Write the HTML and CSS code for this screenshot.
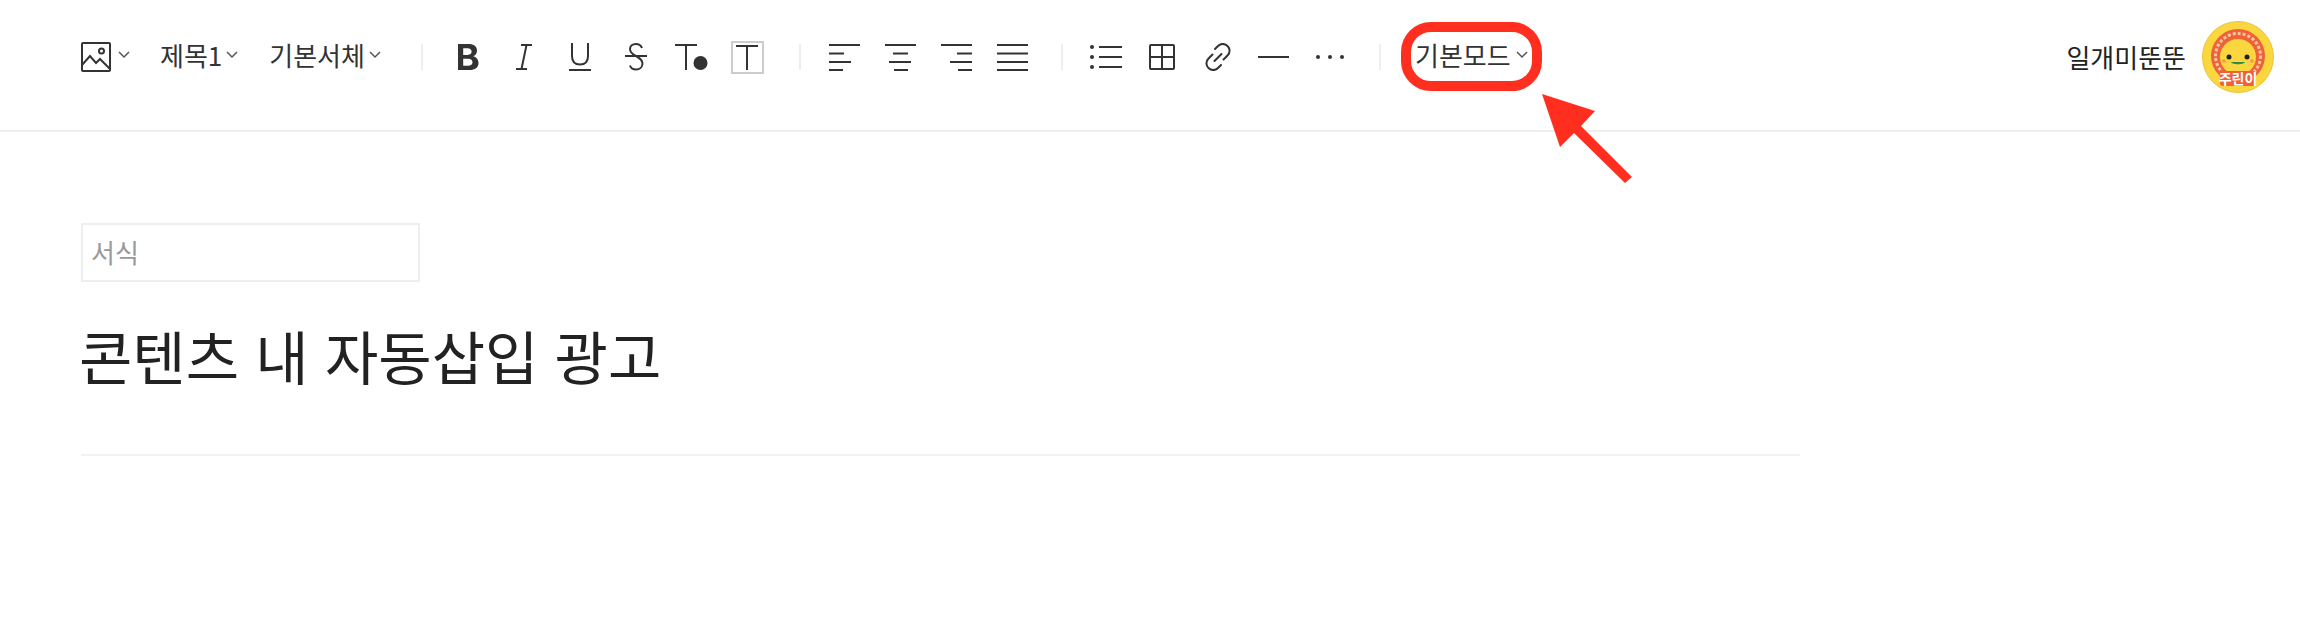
FILE: index.html
```html
<!DOCTYPE html>
<html lang="ko">
<head>
  <meta charset="UTF-8" />
  <title>기본모드</title>
  <link rel="stylesheet" href="styles.css">
</head>
<body>
  <div class="toolbar">
    <div class="tools">
      <button class="tool-pick image-pick">
        <svg width="30" height="30" viewBox="0 0 30 30" fill="none" stroke="#333" stroke-width="2"><rect x="1" y="1" width="28" height="28" rx="1"/><path d="M1 23l8-9 6 7 4-4 10 10"/><circle cx="20.500" cy="9" r="2.500"/></svg>
        <svg class="chev" width="12" height="8" viewBox="0 0 12 8" fill="none" stroke="#555" stroke-width="1.500"><path d="M1 1l5 5 5-5"/></svg>
      </button>
      <button class="tool-pick heading-pick">제목1<svg class="chev" width="12" height="8" viewBox="0 0 12 8" fill="none" stroke="#555" stroke-width="1.500"><path d="M1 1l5 5 5-5"/></svg></button>
      <button class="tool-pick font-pick">기본서체<svg class="chev" width="12" height="8" viewBox="0 0 12 8" fill="none" stroke="#555" stroke-width="1.500"><path d="M1 1l5 5 5-5"/></svg></button>

      <span class="sep"></span>

      <div class="group group-style">
        <button class="icon"><svg width="22" height="26" viewBox="0 0 22 26" fill="#333"><path d="M1 0h10.500c5.500 0 8.500 2.500 8.500 6.500 0 2.800-1.500 5-4 5.800 3.200 .7 5.500 3.200 5.500 6.700 0 4.500-3.500 7-9 7H1zM6.200 4.200v6.700h4.500c2.400 0 3.900-1.200 3.900-3.300s-1.500-3.400-3.900-3.400zM6.200 14.800v7h5c2.700 0 4.300-1.300 4.300-3.500s-1.600-3.500-4.300-3.500z"/></svg></button>
        <button class="icon"><svg width="16" height="26" viewBox="0 0 16 26" fill="none" stroke="#333" stroke-width="2"><path d="M5 1h11M0 25h11M10.500 1L5.500 25"/></svg></button>
        <button class="icon"><svg width="22" height="28" viewBox="0 0 22 28" fill="none" stroke="#333" stroke-width="2"><path d="M3 0v13c0 6 3 8.500 8 8.500s8-2.500 8-8.500V0M0 27h22"/></svg></button>
        <button class="icon"><svg width="22" height="28" viewBox="0 0 22 28" fill="none" stroke="#333" stroke-width="2"><path d="M17 5c-1-2.500-3.300-4-6-4-3.500 0-6 2-6 5 0 3 2 5 6 7 4 2.200 6.500 4 6.500 7.500 0 3.500-2.700 6-6.500 6-3 0-5.200-1.500-6-4M0 13h22"/></svg></button>
        <button class="icon"><svg width="33" height="26" viewBox="0 0 33 26" fill="none" stroke="#333" stroke-width="2"><path d="M0 1h22M11 1v25"/><circle cx="25.500" cy="19" r="7" fill="#333" stroke="none"/></svg></button>
        <button class="icon"><svg width="33" height="33" viewBox="0 0 33 33" fill="none"><rect x="1" y="1" width="31" height="31" stroke="#ccc" stroke-width="2"/><path d="M5 5h22M16 5v24" stroke="#333" stroke-width="2"/></svg></button>
      </div>

      <span class="sep"></span>

      <div class="group group-align">
        <button class="icon"><svg width="31" height="27" viewBox="0 0 31 27" stroke="#333" stroke-width="2"><path d="M0 1h31M0 9.500h15M0 18h22M0 26h14"/></svg></button>
        <button class="icon"><svg width="31" height="27" viewBox="0 0 31 27" stroke="#333" stroke-width="2"><path d="M0 1h31M8 9.500h15M4 18h22M9 26h14"/></svg></button>
        <button class="icon"><svg width="31" height="27" viewBox="0 0 31 27" stroke="#333" stroke-width="2"><path d="M0 1h31M16 9.500h15M9 18h22M17 26h14"/></svg></button>
        <button class="icon"><svg width="31" height="27" viewBox="0 0 31 27" stroke="#333" stroke-width="2"><path d="M0 1h31M0 9.500h31M0 18h31M0 26h31"/></svg></button>
      </div>

      <span class="sep"></span>

      <div class="group group-insert">
        <button class="icon"><svg width="32" height="24" viewBox="0 0 32 24" fill="#333"><circle cx="2" cy="2" r="2"/><circle cx="2" cy="12" r="2"/><circle cx="2" cy="22" r="2"/><path d="M9 1h23v2H9zM9 11h23v2H9zM9 21h23v2H9z"/></svg></button>
        <button class="icon"><svg width="26" height="26" viewBox="0 0 26 26" fill="none" stroke="#333" stroke-width="2"><rect x="1" y="1" width="24" height="24" rx="1"/><path d="M13 1v24M1 13h24"/></svg></button>
        <button class="icon"><svg width="28" height="28" viewBox="0 0 28 28" fill="none" stroke="#333" stroke-width="2" stroke-linecap="round"><path d="M11 6l3-3c3-3 7-2.500 9.500 0s3 6.500 0 9.500l-4 4M17 22l-3 3c-3 3-7 2.500-9.500 0s-3-6.500 0-9.500l4-4M10.500 18l7-7"/></svg></button>
        <button class="icon"><svg width="31" height="4" viewBox="0 0 31 4" stroke="#333" stroke-width="2"><path d="M0 2h31"/></svg></button>
        <button class="icon"><svg width="28" height="6" viewBox="0 0 28 6" fill="#333"><circle cx="2" cy="3" r="2"/><circle cx="14" cy="3" r="2"/><circle cx="26" cy="3" r="2"/></svg></button>
      </div>

      <span class="sep"></span>

      <button class="tool-pick mode-pick">기본모드<svg class="chev" width="12" height="8" viewBox="0 0 12 8" fill="none" stroke="#555" stroke-width="1.500"><path d="M1 1l5 5 5-5"/></svg></button>
    </div>

    <div class="user">
      <span class="user-name">일개미뚠뚠</span>
      <svg class="avatar" width="72" height="72" viewBox="0 0 72 72">
        <circle cx="36" cy="36" r="35.500" fill="#fbd63f" stroke="#e8c53c"/>
        <circle cx="36" cy="35" r="27" fill="#ee6139"/>
        <circle cx="36" cy="35" r="22.500" fill="none" stroke="#fbc9a0" stroke-width="3" stroke-dasharray="3 2"/>
        <circle cx="36" cy="36" r="18" fill="#fbd63f"/>
        <circle cx="27" cy="36" r="2.500" fill="#222"/>
        <circle cx="45" cy="36" r="2.500" fill="#222"/>
        <circle cx="22" cy="40" r="2" fill="#f6a04d"/>
        <circle cx="50" cy="40" r="2" fill="#f6a04d"/>
        <path d="M29 41h14c-1 3-13 3-14 0z" fill="#2f8f46"/>
        <rect x="18" y="50" width="36" height="15" rx="3" fill="#ee6139"/>
        <text x="36" y="63" class="avatar-text">주린이</text>
      </svg>
    </div>
  </div>

  <div class="editor">
    <div class="format-box">서식</div>
    <h1 class="post-title">콘텐츠 내 자동삽입 광고</h1>
    <hr class="title-rule">
  </div>

  <!-- red annotation drawn over the screenshot -->
  <div class="mark-box"></div>
  <svg class="mark-arrow" width="94" height="94" viewBox="0 0 94 94"><path d="M2 2L55 19 41 34 92 85 85 91 34 41 20 55z" fill="#ff2e1f"/></svg>
</body>
</html>
```

FILE: styles.css
```css
* {
  margin: 0;
  padding: 0;
  box-sizing: border-box;
}
body {
  font-family: "Noto Sans CJK KR", "Noto Sans", sans-serif;
  font-weight: 400;
  background: #fff;
  color: #333;
  position: relative;
  min-height: 100vh;
  overflow: hidden;
}
button {
  font: inherit;
  color: inherit;
  background: none;
  border: none;
  display: flex;
  align-items: center;
}

/* TOOLBAR */
.toolbar {
  height: 132px;
  border-bottom: 2px solid #eee;
  padding: 0 26px 16px 81px;
  display: flex;
  align-items: center;
  justify-content: space-between;
}
.tools { display: flex; align-items: center; }
.group { display: flex; }
.group-style { margin: 0 23px 0 17px; }
.group-align { margin: 0 20px 0 16px; }
.group-insert { margin: 0 21px 0 15px; }
.sep {
  width: 2px; height: 26px;
  background: #eee;
}
.tool-pick {
  font-size: 26px;
  line-height: 40px;
  padding-bottom: 4px;
}
.chev { margin-left: 4px; }
.image-pick { margin-right: 30px; padding-bottom: 0; }
.image-pick .chev { margin: 0 0 4px 7px; }
.heading-pick { margin-right: 31px; }
.font-pick { margin-right: 40px; }
.mode-pick { margin-left: 34px; }
.mode-pick .chev { margin-left: 5px; }
.icon {
  width: 56px; height: 40px;
  justify-content: center;
}

/* USER */
.user { display: flex; align-items: center; gap: 16px; color: #222; }
.user-name { font-size: 26px; padding-bottom: 2px; }
.avatar-text {
  font-size: 14px;
  font-weight: 700;
  fill: #fff;
  text-anchor: middle;
}

/* EDITOR */
.editor { padding: 91px 500px 0 81px; }
.format-box {
  width: 339px; height: 59px;
  border: 2px solid #eee;
  padding-left: 8px;
  font-size: 26px;
  line-height: 53px;
  color: #999;
}
.post-title {
  font-size: 58px;
  font-weight: 400;
  color: #222;
  line-height: 84px;
  margin: 31px 0 0 -2px;
}
.title-rule {
  border: none;
  border-top: 2px solid #f2f2f2;
  width: 1719px;
  margin-top: 57px;
}

/* ANNOTATION */
.mark-box {
  position: absolute;
  left: 1401px; top: 22px;
  width: 141px; height: 69px;
  border: 10px solid #ff2e1f;
  border-radius: 30px;
}
.mark-arrow {
  position: absolute;
  left: 1540px; top: 92px;
}
```
